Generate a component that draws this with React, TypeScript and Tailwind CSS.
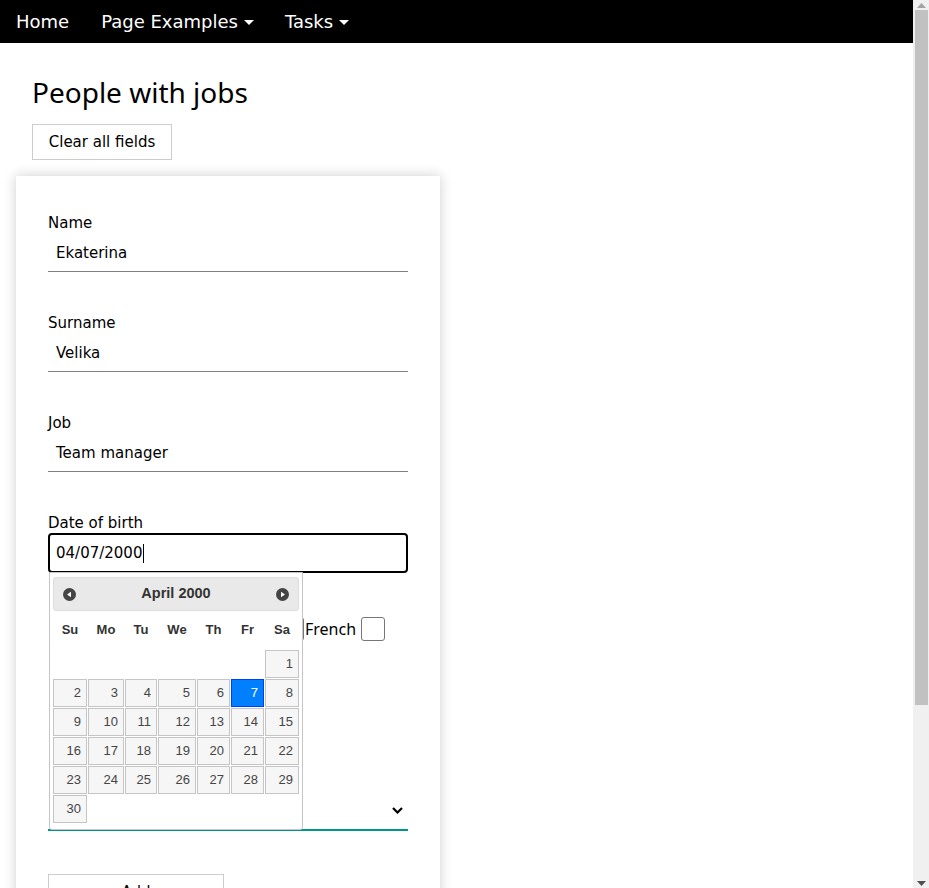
import React from "react"

const Caret = () => (
  <svg width="10" height="5" viewBox="0 0 10 5" className="ml-[6px] mt-[2px]">
    <path d="M0 0 L10 0 L5 5 Z" fill="white" />
  </svg>
)

const NavCircle = ({ dir }: { dir: "prev" | "next" }) => (
  <svg width="13" height="13" viewBox="0 0 13 13">
    <circle cx="6.5" cy="6.5" r="6.5" fill="#444444" />
    {dir === "prev" ? (
      <path d="M4 6.5 L8 3.8 L8 9.2 Z" fill="white" />
    ) : (
      <path d="M9 6.5 L5 3.8 L5 9.2 Z" fill="white" />
    )}
  </svg>
)

const cols = ["Su", "Mo", "Tu", "We", "Th", "Fr", "Sa"]
const weeks: (number | null)[][] = [
  [null, null, null, null, null, null, 1],
  [2, 3, 4, 5, 6, 7, 8],
  [9, 10, 11, 12, 13, 14, 15],
  [16, 17, 18, 19, 20, 21, 22],
  [23, 24, 25, 26, 27, 28, 29],
  [30, null, null, null, null, null, null],
]

const Datepicker = () => (
  <div className="absolute left-px top-[calc(100%-1px)] z-10 w-[254px] h-[258px] bg-white border border-[#c5c5c5] rounded-b-[3px] px-[3px] pt-[4px] font-['Liberation_Sans',Arial,sans-serif] text-[#454545]">
    <div className="h-[34px] flex items-center justify-between px-[9px] bg-[#e9e9e9] border border-[#dddddd] rounded-[3px]">
      <NavCircle dir="prev" />
      <span className="text-[14.5px] font-bold text-[#333333]">April 2000</span>
      <NavCircle dir="next" />
    </div>
    <div className="grid grid-cols-[34px_36px_32px_38px_33px_33px_34px] gap-px">
      {cols.map((c) => (
        <div key={c} className="h-[38px] flex items-center justify-center text-[13px] font-bold text-[#333333]">
          {c}
        </div>
      ))}
      {weeks.flat().map((d, i) =>
        d === null ? (
          <div key={i} className="h-[28px]" />
        ) : d === 7 ? (
          <div key={i} className="h-[28px] flex items-center justify-end pr-[5px] text-[13px] bg-[#007fff] border border-[#003eff] text-white">
            {d}
          </div>
        ) : (
          <div key={i} className="h-[28px] flex items-center justify-end pr-[5px] text-[13px] bg-[#f6f6f6] border border-[#c5c5c5]">
            {d}
          </div>
        )
      )}
    </div>
  </div>
)

const Field = ({ label, value }: { label: string; value: string }) => (
  <div className="mb-10">
    <div className="h-5 leading-[22px]">{label}</div>
    <div className="mt-1 h-9 flex items-center pl-2 border-b border-[#808080]">{value}</div>
  </div>
)

const Scrollbar = () => (
  <div className="w-4 h-[888px] shrink-0 bg-[#f0f0f0] flex flex-col items-center">
    <div className="h-[10px] flex items-center justify-center">
      <svg width="9" height="5" viewBox="0 0 9 5">
        <path d="M0 5 L4.5 0 L9 5 Z" fill="#a3a3a3" />
      </svg>
    </div>
    <div className="w-[13px] h-[695px] bg-[#c1c1c1]" />
    <div className="mt-auto h-[10px] flex items-center justify-center">
      <svg width="9" height="5" viewBox="0 0 9 5">
        <path d="M0 0 L9 0 L4.5 5 Z" fill="#505050" />
      </svg>
    </div>
  </div>
)

export default function App() {
  return (
    <div className="flex bg-white text-black font-['DejaVu_Sans',Verdana,sans-serif]">
      <div className="flex-1 min-h-[1091px]">
        <nav className="h-[43px] bg-black flex items-center text-white text-[18px]">
          <a className="px-4">Home</a>
          <a className="px-4 flex items-center">
            Page Examples
            <Caret />
          </a>
          <a className="pl-[15px] pr-4 flex items-center">
            Tasks
            <Caret />
          </a>
        </nav>
        <div className="px-4">
          <h1 className="ml-4 mt-[31px] text-[28px] leading-9 font-['Noto_Sans',sans-serif]">People with jobs</h1>
          <button className="ml-4 mt-[14px] w-[140px] h-9 border border-[#cccccc] text-[15px] leading-[22px]">Clear all fields</button>
          <div className="mt-4 w-[424px] bg-white shadow-[0_0_12px_rgba(0,0,0,0.2)] px-8 pt-9 pb-10 text-[15px]">
            <Field label="Name" value="Ekaterina" />
            <Field label="Surname" value="Velika" />
            <Field label="Job" value="Team manager" />
            <div className="relative">
              <div className="h-5 leading-[22px]">Date of birth</div>
              <div className="mt-px h-10 flex items-center pl-[6px] border-2 border-black rounded-[4px]">
                04/07/2000
                <span className="ml-px w-px h-[19px] bg-black" />
              </div>
              <Datepicker />
            </div>
            <div className="mt-[44px] h-6 flex items-center font-['Noto_Sans',sans-serif] text-[16px]">
              <div className="w-[232px]" />
              <span className="w-6 h-6 border-[1.5px] border-[#767676] rounded-[3px]" />
              <span className="ml-px">French</span>
              <span className="ml-[5px] w-6 h-6 border-[1.5px] border-[#767676] rounded-[3px]" />
            </div>
            <div className="mt-[154px] h-9 flex items-center justify-end pr-[5px] border-b-2 border-[#009688]">
              <svg width="11" height="7" viewBox="0 0 11 7" className="-mt-1">
                <path d="M1 1 L5.5 5.5 L10 1" stroke="black" strokeWidth="2.2" fill="none" />
              </svg>
            </div>
            <button className="mt-[43px] w-[176px] h-9 border border-[#cccccc]">Add</button>
          </div>
        </div>
      </div>
      <Scrollbar />
    </div>
  )
}
